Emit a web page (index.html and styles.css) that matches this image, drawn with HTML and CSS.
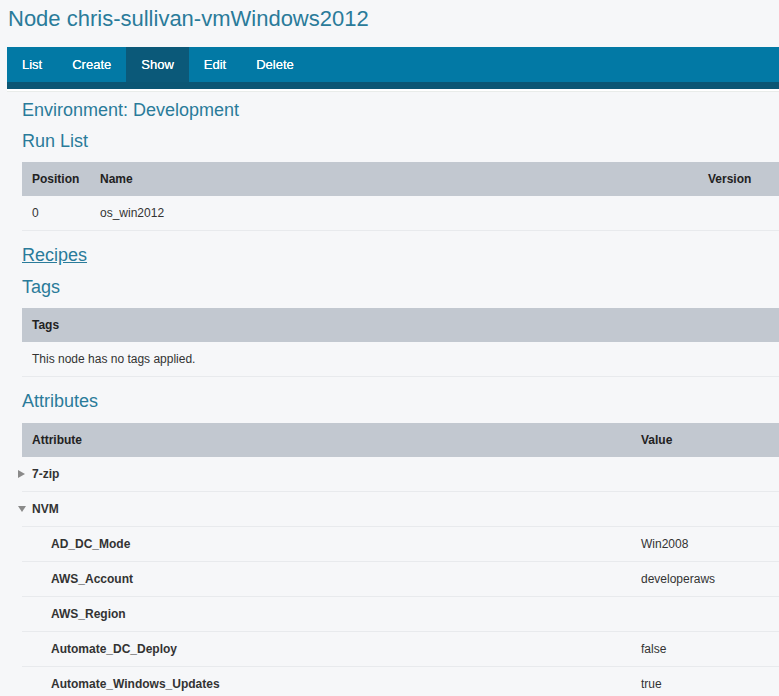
FILE: index.html
```html
<!DOCTYPE html>
<html>
<head>
<meta charset="utf-8">
<link rel="stylesheet" href="styles.css">
</head>
<body>
<div class="page">
  <h1 class="title">Node chris-sullivan-vmWindows2012</h1>
  <nav class="nav">
    <ul class="tabs">
      <li class="tab">List</li>
      <li class="tab">Create</li>
      <li class="tab active">Show</li>
      <li class="tab">Edit</li>
      <li class="tab">Delete</li>
    </ul>
  </nav>
  <div class="content">
    <h2 class="heading">Environment: Development</h2>
    <h2 class="heading">Run List</h2>
    <table class="grid">
      <colgroup><col class="c-pos"><col class="c-name"><col></colgroup>
      <thead><tr><th>Position</th><th>Name</th><th>Version</th></tr></thead>
      <tbody><tr><td>0</td><td>os_win2012</td><td></td></tr></tbody>
    </table>
    <h2 class="heading tall"><a class="link" href="#">Recipes</a></h2>
    <h2 class="heading">Tags</h2>
    <table class="grid">
      <thead><tr><th>Tags</th></tr></thead>
      <tbody><tr><td>This node has no tags applied.</td></tr></tbody>
    </table>
    <h2 class="heading tall">Attributes</h2>
    <table class="grid">
      <colgroup><col class="c-attr"><col></colgroup>
      <thead><tr><th>Attribute</th><th>Value</th></tr></thead>
      <tbody>
        <tr><td class="key"><span class="toggle"><span class="tri-right"></span></span>7-zip</td><td></td></tr>
        <tr><td class="key"><span class="toggle"><span class="tri-down"></span></span>NVM</td><td></td></tr>
        <tr><td class="key child">AD_DC_Mode</td><td>Win2008</td></tr>
        <tr><td class="key child">AWS_Account</td><td>developeraws</td></tr>
        <tr><td class="key child">AWS_Region</td><td></td></tr>
        <tr><td class="key child">Automate_DC_Deploy</td><td>false</td></tr>
        <tr><td class="key child">Automate_Windows_Updates</td><td>true</td></tr>
      </tbody>
    </table>
  </div>
</div>
</body>
</html>
```

FILE: styles.css
```css
html, body {
  margin: 0;
  padding: 0;
  background: #f6f7f9;
  overflow: hidden;
}
body {
  font-family: "Liberation Sans", Arial, sans-serif;
  color: #333;
}
.page {
  padding-left: 7px;
}
.title {
  margin: 6px 0 15px 1px;
  font-size: 22px;
  line-height: 26px;
  font-weight: normal;
  color: #2a7b9a;
}
.nav {
  background: #0279a5;
  border-bottom: 7px solid #0b5674;
  box-shadow: 0 2px 0 #ffffff, 0 3px 0 #e9ecea;
}
.tabs {
  list-style: none;
  margin: 0;
  padding: 0;
  display: flex;
}
.tab {
  padding: 0 15px;
  height: 35px;
  line-height: 35px;
  font-size: 13px;
  color: #ffffff;
  text-shadow: 0 0 0.4px #ffffff;
}
.tab.active {
  background: #0b5979;
}
.content {
  padding: 0 0 0 15px;
  margin-top: 11px;
}
.heading {
  margin: 11px 0;
  font-size: 18px;
  line-height: 20px;
  font-weight: normal;
  color: #2a7b9a;
}
.heading.tall {
  line-height: 21px;
}
.content > .heading:first-child {
  margin-top: 0;
}
.link {
  color: #2a7b9a;
  text-decoration: underline;
}
.grid {
  width: 100%;
  border-collapse: collapse;
  table-layout: fixed;
  margin-bottom: 14px;
  font-size: 12px;
}
.c-pos { width: 68px; }
.c-name { width: 608px; }
.c-attr { width: 609px; }
.grid th {
  background: #c2c8d0;
  text-align: left;
  font-weight: bold;
  color: #222;
  padding: 10px;
  line-height: 14px;
  height: 14px;
}
.grid td {
  padding: 10px;
  line-height: 14px;
  height: 14px;
  border-bottom: 1px solid #e8eaed;
  color: #333;
}
.grid td.key {
  font-weight: bold;
}
.grid td.child {
  padding-left: 29px;
}
.toggle {
  display: inline-block;
  width: 14px;
  margin-left: -14px;
  vertical-align: middle;
  line-height: 0;
}
.tri-right {
  display: inline-block;
  width: 0;
  height: 0;
  border-left: 7px solid #8a8a8a;
  border-top: 4px solid transparent;
  border-bottom: 4px solid transparent;
  margin-top: -2px;
}
.tri-down {
  display: inline-block;
  width: 0;
  height: 0;
  border-top: 6px solid #8a8a8a;
  border-left: 4px solid transparent;
  border-right: 4px solid transparent;
  margin-top: -1px;
}
```
